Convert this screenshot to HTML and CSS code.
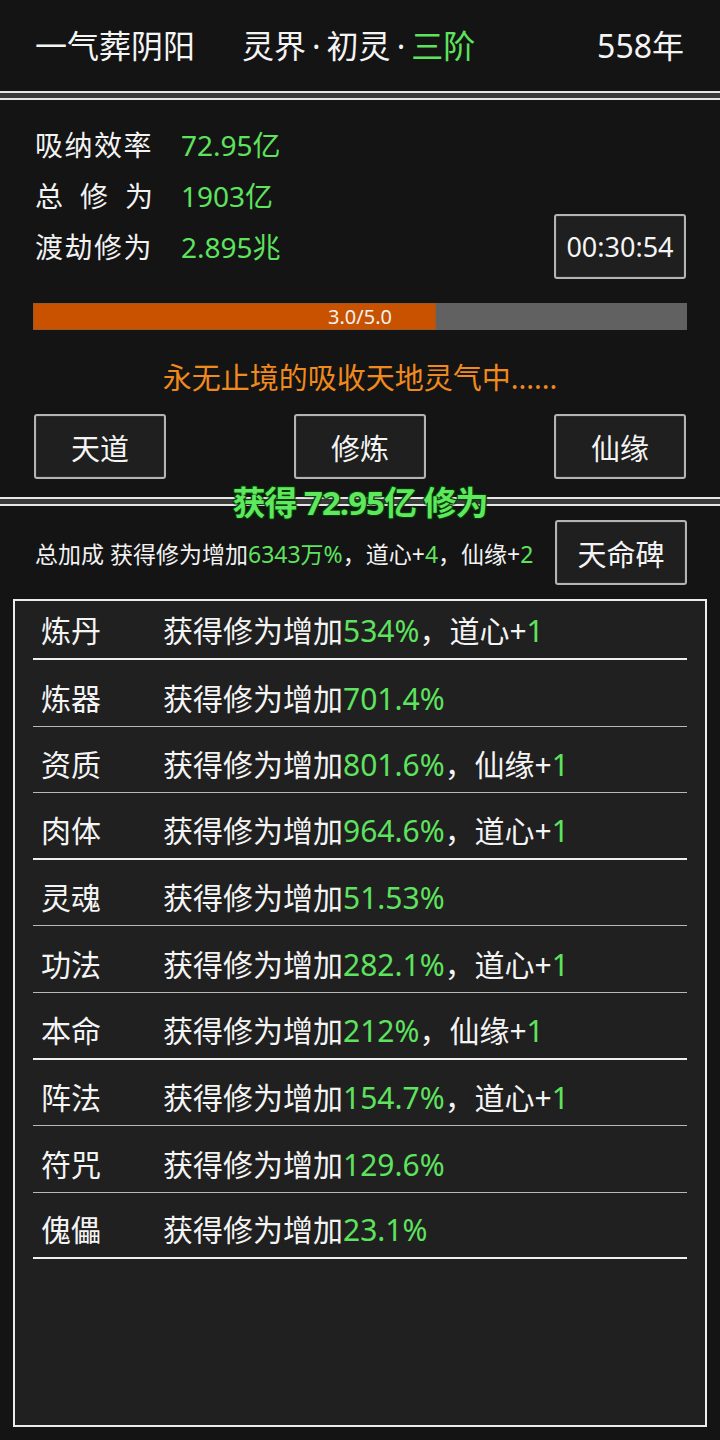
FILE: index.html
```html
<!DOCTYPE html>
<html lang="zh">
<head>
<meta charset="utf-8">
<link rel="stylesheet" href="styles.css">
</head>
<body>
<div class="app">
  <header class="header">
    <span class="title">一气葬阴阳</span>
    <span class="realm">灵界<span class="dot">·</span>初灵<span class="dot">·</span><span class="g">三阶</span></span>
    <span class="year">558年</span>
  </header>
  <div class="sep"></div>

  <section class="panel stats-panel">
    <div class="stats-row">
      <div class="stats">
        <div class="stat"><span class="label">吸纳效率</span><span class="val">72.95亿</span></div>
        <div class="stat"><span class="label just">总 修 为</span><span class="val">1903亿</span></div>
        <div class="stat"><span class="label">渡劫修为</span><span class="val">2.895兆</span></div>
      </div>
      <div class="btn timer">00:30:54</div>
    </div>
    <div class="bar"><div class="fill" style="width:61.6%"></div><span class="bar-text">3.0/5.0</span></div>
    <div class="status">永无止境的吸收天地灵气中......</div>
    <div class="btns">
      <div class="btn">天道</div>
      <div class="btn">修炼</div>
      <div class="btn">仙缘</div>
    </div>
  </section>

  <div class="sep-wrap">
    <div class="sep"></div>
    <div class="gain">获得 72.95亿 修为</div>
  </div>

  <section class="panel list-panel">
    <div class="bonus-row">
      <div class="bonus">总加成 获得修为增加<span class="g">6343万%</span>，道心+<span class="g">4</span>，仙缘+<span class="g">2</span></div>
      <div class="btn">天命碑</div>
    </div>
    <div class="list">
      <div class="row thick first"><span class="name">炼丹</span><span class="desc">获得修为增加<span class="g">534%</span>，道心+<span class="g">1</span></span></div>
      <div class="row"><span class="name">炼器</span><span class="desc">获得修为增加<span class="g">701.4%</span></span></div>
      <div class="row"><span class="name">资质</span><span class="desc">获得修为增加<span class="g">801.6%</span>，仙缘+<span class="g">1</span></span></div>
      <div class="row thick"><span class="name">肉体</span><span class="desc">获得修为增加<span class="g">964.6%</span>，道心+<span class="g">1</span></span></div>
      <div class="row"><span class="name">灵魂</span><span class="desc">获得修为增加<span class="g">51.53%</span></span></div>
      <div class="row"><span class="name">功法</span><span class="desc">获得修为增加<span class="g">282.1%</span>，道心+<span class="g">1</span></span></div>
      <div class="row thick"><span class="name">本命</span><span class="desc">获得修为增加<span class="g">212%</span>，仙缘+<span class="g">1</span></span></div>
      <div class="row"><span class="name">阵法</span><span class="desc">获得修为增加<span class="g">154.7%</span>，道心+<span class="g">1</span></span></div>
      <div class="row"><span class="name">符咒</span><span class="desc">获得修为增加<span class="g">129.6%</span></span></div>
      <div class="row thick"><span class="name">傀儡</span><span class="desc">获得修为增加<span class="g">23.1%</span></span></div>
    </div>
  </section>
</div>
</body>
</html>
```

FILE: styles.css
```css
* { box-sizing: border-box; }
html, body {
  margin: 0;
  padding: 0;
  background: #141414;
}
body {
  width: 720px;
  height: 1440px;
  overflow: hidden;
  color: #f2f2f2;
  font-family: "Noto Sans", "Noto Sans CJK SC", sans-serif;
}
.app {
  display: flex;
  flex-direction: column;
  height: 1440px;
}
.g { color: #5ee35e; }

.header {
  height: 91px;
  display: flex;
  align-items: center;
  padding: 0 36px 0 35px;
  font-size: 32px;
  line-height: 1;
  color: #f4f4f4;
}
.realm { margin-left: 47px; }
.dot { margin: 0 6px; }
.year { margin-left: auto; }

.sep {
  height: 9px;
  border-top: 2px solid #e6e6e6;
  border-bottom: 2px solid #e6e6e6;
  background: #3a3a3a;
}
.sep-wrap { position: relative; }
.gain {
  position: absolute;
  left: 0;
  right: 0;
  top: -14px;
  text-align: center;
  font-size: 33px;
  font-weight: 700;
  line-height: 40px;
  color: #5ee85e;
  letter-spacing: -1px;
  text-shadow: 0 0 1px #0b3a0b, 1px 1px 1px #0b3a0b, -1px -1px 1px #0b3a0b, 1px -1px 1px #0b3a0b, -1px 1px 1px #0b3a0b;
}

.panel { padding: 0 33px; }
.stats-panel {
  padding-top: 20px;
  padding-bottom: 18px;
}
.stats-row {
  display: flex;
  justify-content: space-between;
  align-items: flex-end;
}
.stats { margin-left: 2px; }
.stat {
  display: flex;
  font-size: 28px;
  line-height: 51px;
}
.label {
  width: 118px;
  letter-spacing: 1.5px;
  color: #f2f2f2;
}
.label.just {
  text-align: justify;
  text-align-last: justify;
  letter-spacing: 0;
}
.val {
  margin-left: 28px;
  color: #5ee35e;
}

.btn {
  width: 132px;
  height: 65px;
  display: flex;
  align-items: center;
  justify-content: center;
  background: #1f1f1f;
  border: 2px solid #b4b4b4;
  border-radius: 3px;
  font-size: 29px;
  color: #f4f4f4;
  box-shadow: inset 0 0 0 1px #2c2c2c;
}
.timer {
  margin-right: 1px;
  margin-bottom: -6px;
  font-size: 27px;
}

.bar {
  position: relative;
  margin-top: 30px;
  height: 27px;
  background: #616161;
  display: flex;
}
.fill {
  height: 100%;
  background: #c95200;
  border: 1px solid #9a5a2a;
}
.bar-text {
  position: absolute;
  left: 0;
  right: 0;
  top: 0;
  text-align: center;
  font-size: 20px;
  line-height: 27px;
  color: #f2f2f2;
}

.status {
  margin-top: 28px;
  text-align: center;
  font-size: 29px;
  line-height: 40px;
  color: #f08a1c;
}

.btns {
  margin: 16px 1px 0;
  display: flex;
  justify-content: space-between;
}

.list-panel {
  flex: 1;
  display: flex;
  flex-direction: column;
  padding: 14px 13px 13px;
}
.bonus-row {
  display: flex;
  align-items: center;
  justify-content: space-between;
  padding: 0 20px 0 22px;
}
.bonus {
  font-size: 23px;
  color: #f2f2f2;
  letter-spacing: 0;
}
.list {
  margin-top: 14px;
  flex: 1;
  background: #202020;
  border: 2px solid #ececec;
  padding: 0 18px;
}
.row {
  height: 66.6px;
  display: flex;
  align-items: flex-end;
  padding: 0 0 10px 8px;
  border-bottom: 1px solid #b8b8b8;
  font-size: 30px;
  line-height: 34px;
  color: #f4f4f4;
}
.row.thick { border-bottom: 2px solid #f0f0f0; }
.row.first { height: 59px; }
.name { width: 122px; }
```
